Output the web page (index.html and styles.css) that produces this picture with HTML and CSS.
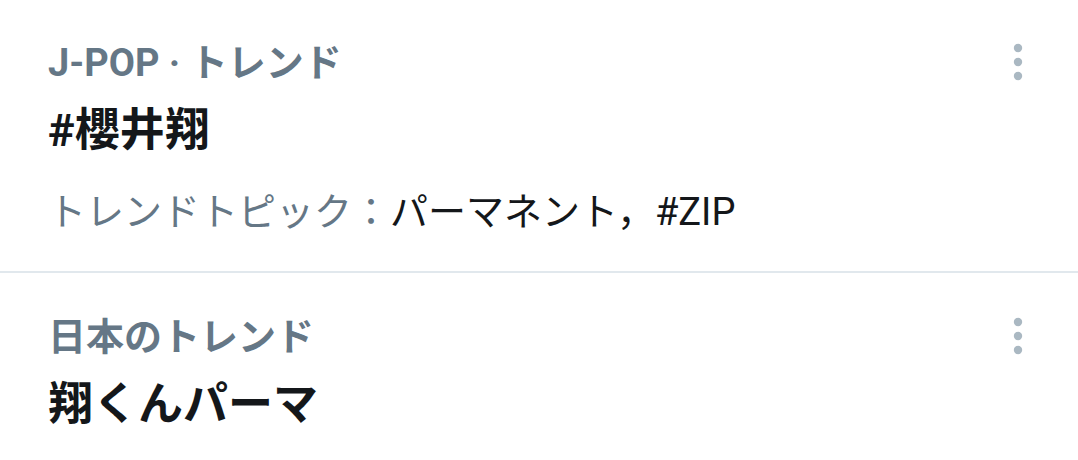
FILE: index.html
```html
<!DOCTYPE html>
<html lang="ja">
<head>
  <meta charset="UTF-8">
  <meta name="viewport" content="width=device-width, initial-scale=1.0">
  <title>トレンド</title>
  <link rel="stylesheet" href="styles.css">
</head>
<body>
  <div class="trends">
    <div class="trend">
      <div class="trend-body">
        <div class="trend-meta">J-POP · トレンド</div>
        <div class="trend-title">#櫻井翔</div>
        <div class="trend-topics"><span class="topics-label">トレンドトピック：</span>パーマネント，#ZIP</div>
      </div>
      <button class="more" aria-label="その他">
        <svg width="10" height="38" viewBox="0 0 10 38"><circle cx="5" cy="5" r="4.2"/><circle cx="5" cy="19" r="4.2"/><circle cx="5" cy="33" r="4.2"/></svg>
      </button>
    </div>
    <div class="trend">
      <div class="trend-body">
        <div class="trend-meta">日本のトレンド</div>
        <div class="trend-title">翔くんパーマ</div>
      </div>
      <button class="more" aria-label="その他">
        <svg width="10" height="38" viewBox="0 0 10 38"><circle cx="5" cy="5" r="4.2"/><circle cx="5" cy="19" r="4.2"/><circle cx="5" cy="33" r="4.2"/></svg>
      </button>
    </div>
  </div>
</body>
</html>
```
FILE: styles.css
```css
body {
  margin: 0;
  background: #fff;
  font-family: Roboto, "Noto Sans CJK JP", sans-serif;
  color: #14171a;
}
.trend {
  display: flex;
  align-items: flex-start;
  padding: 38px 55px 34px 48px;
  border-bottom: 2px solid #e1e8ed;
}
.trend + .trend {
  padding-top: 39px;
}
.trend:last-child {
  border-bottom: none;
}
.trend-body {
  flex: 1;
}
.trend-meta {
  font-size: 38px;
  font-weight: 700;
  color: #657786;
  line-height: 50px;
}
.trend-title {
  font-size: 45px;
  font-weight: 700;
  line-height: 60px;
  margin-top: 13px;
}
.trend-topics {
  font-size: 38px;
  line-height: 50px;
  margin-top: 26px;
}
.topics-label {
  color: #657786;
}
.more {
  background: none;
  border: none;
  padding: 0;
  margin-top: 5px;
  fill: #aab8c2;
}
```
